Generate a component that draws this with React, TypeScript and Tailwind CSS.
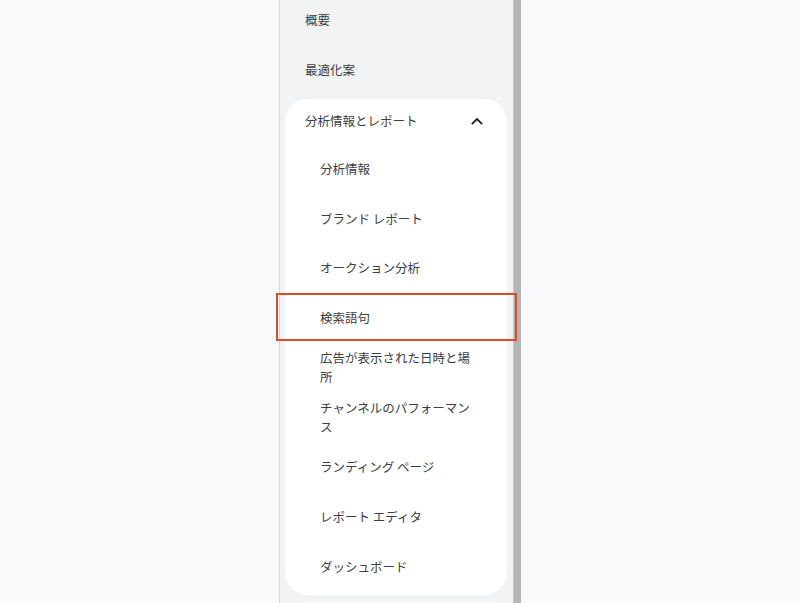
const subItems: string[][] = [
  ['分析情報'],
  ['ブランド レポート'],
  ['オークション分析'],
  ['検索語句'],
  ['広告が表示された日時と場所'],
  ['チャンネルのパフォーマンス'],
  ['ランディング ページ'],
  ['レポート エディタ'],
  ['ダッシュボード'],
]

function ChevronUp() {
  return (
    <svg width="14" height="14" viewBox="0 0 14 14" fill="none" aria-hidden>
      <path d="M2.5 9.5L7 5l4.5 4.5" stroke="#202124" strokeWidth="1.8" strokeLinecap="square" />
    </svg>
  )
}

export default function App() {
  return (
    <div
      className="flex h-[603px] w-[800px] overflow-hidden bg-[#f8f9fa] text-[12.5px] text-[#3c4043]"
      style={{ fontFamily: '"Noto Sans CJK JP", "Noto Sans", sans-serif' }}
    >
      <div className="w-[279px] shrink-0" />

      <div className="relative flex shrink-0">
        {/* nav panel */}
        <nav className="flex w-[234px] flex-col border-l border-[#d6d8db] bg-[#f1f3f4]">
          <div className="flex h-[41px] shrink-0 items-center pl-[25px]">概要</div>
          <div className="flex h-[58px] shrink-0 items-center pl-[25px]">最適化案</div>

          <div className="ml-[5px] mr-[6px] shrink-0 rounded-[22px] bg-white pb-[4px]">
            <div className="flex h-[44px] items-center justify-between pl-[20px] pr-[23px]">
              <span>分析情報とレポート</span>
              <ChevronUp />
            </div>
            {subItems.map((lines) => (
              <div
                key={lines[0]}
                className="flex h-[49.75px] flex-col justify-center pl-[35px] pr-[34px] pt-[1px] leading-[19px]"
              >
                {lines.map((l) => (
                  <span key={l}>{l}</span>
                ))}
              </div>
            ))}
          </div>

          <div className="mt-[7px] ml-[18px] mr-[6px] h-[20px] shrink-0 rounded-t-[14px] bg-white" />
        </nav>

        {/* scrollbar */}
        <div className="w-[8px] bg-[#b4b5b7] border-l border-[#c6c7c9]" />

        {/* highlight annotation */}
        <div className="pointer-events-none absolute left-[-3px] top-[293px] h-[48px] w-[241px] border-2 border-[#dc4c24]" />
      </div>

      <div className="flex-1 bg-[#f9fafb]" />
    </div>
  )
}
